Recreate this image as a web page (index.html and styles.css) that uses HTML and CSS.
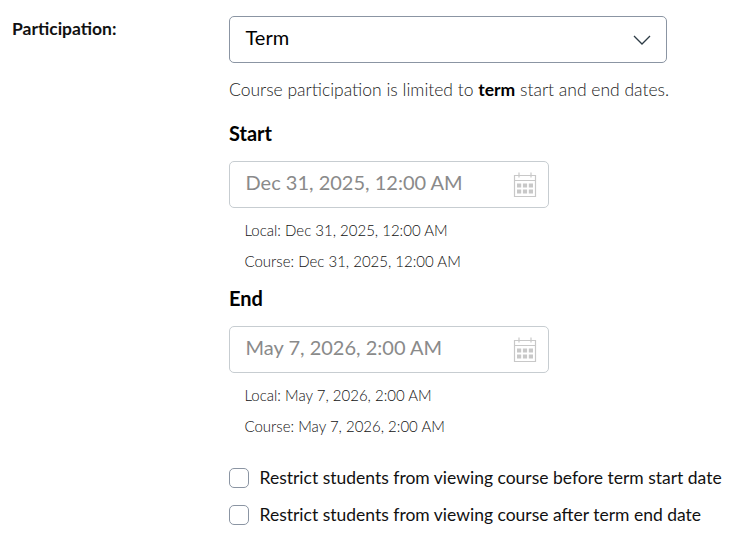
FILE: index.html
```html
<!DOCTYPE html>
<html lang="en">
<head>
    <meta charset="UTF-8">
    <title>Participation</title>
    <link rel="stylesheet" href="styles.css">
</head>
<body>
    <div class="form-row">
        <div class="row-label">Participation:</div>
        <div class="row-body">
            <div class="select-box">
                <span>Term</span>
                <svg class="chevron" width="18" height="10" viewBox="0 0 18 10"><path d="M1 1l8 8 8-8" fill="none" stroke="#2d3b45" stroke-width="1.3"/></svg>
            </div>
            <p class="help">Course participation is limited to <strong>term</strong> start and end dates.</p>

            <h3 class="date-title first">Start</h3>
            <div class="date-box">
                <span>Dec 31, 2025, 12:00 AM</span>
                <svg class="cal" width="24" height="25" viewBox="0 0 24 25"><use href="#cal-icon"/></svg>
            </div>
            <div class="date-note first">Local: Dec 31, 2025, 12:00 AM</div>
            <div class="date-note">Course: Dec 31, 2025, 12:00 AM</div>

            <h3 class="date-title">End</h3>
            <div class="date-box">
                <span>May 7, 2026, 2:00 AM</span>
                <svg class="cal" width="24" height="25" viewBox="0 0 24 25"><use href="#cal-icon"/></svg>
            </div>
            <div class="date-note first">Local: May 7, 2026, 2:00 AM</div>
            <div class="date-note">Course: May 7, 2026, 2:00 AM</div>

            <label class="check-row top"><span class="check"></span>Restrict students from viewing course before term start date</label>
            <label class="check-row"><span class="check"></span>Restrict students from viewing course after term end date</label>
        </div>
    </div>

    <!-- shared calendar icon -->
    <svg class="defs" width="0" height="0">
        <symbol id="cal-icon" viewBox="0 0 24 25">
            <path d="M1.5 3.5h21v21h-21z M1.5 8.5h21 M6 0.5v5 M18 0.5v5" fill="none" stroke="#c8c8c8" stroke-width="1.2"/>
            <path d="M4 11.5h4.2v4H4z M9.9 11.5h4.2v4H9.9z M15.8 11.5H20v4h-4.2z M4 17.5h4.2v4H4z M9.9 17.5h4.2v4H9.9z M15.8 17.5H20v4h-4.2z" fill="#c8c8c8"/>
        </symbol>
    </svg>
</body>
</html>
```

FILE: styles.css
```css
body {
    margin: 0;
    background: white;
    font-family: 'Lato', 'Liberation Sans', sans-serif;
    color: #000;
    overflow: hidden;
}

.form-row {
    display: flex;
    padding: 16px 0 0 12px;
}

.row-label {
    width: 217px;
    flex: none;
    padding-top: 3px;
    font-size: 17.5px;
    line-height: 20px;
    font-weight: 700;
    color: #111;
}

.row-body {
    flex: none;
    width: 500px;
}

.select-box {
    display: flex;
    align-items: center;
    justify-content: space-between;
    box-sizing: border-box;
    width: 438px;
    height: 47px;
    padding: 0 15px 0 15.5px;
    border: 1px solid #8b95a3;
    border-radius: 5px;
    font-size: 20px;
}

.select-box span,
.date-box span {
    margin-bottom: 5px;
}

.help {
    margin: 15px 0 0;
    font-size: 17.5px;
    line-height: 24px;
    color: #222;
    font-weight: 300;
}

.help strong {
    font-weight: 700;
    color: #000;
}

.date-title {
    margin: 14px 0 0;
    font-size: 20px;
    line-height: 24px;
    font-weight: 700;
}

.date-title.first {
    margin-top: 19px;
}

.date-box {
    display: flex;
    align-items: center;
    justify-content: space-between;
    box-sizing: border-box;
    width: 320px;
    height: 47px;
    margin-top: 16px;
    padding: 0 11px 0 15.5px;
    border: 1px solid #c7cdd1;
    border-radius: 5px;
    font-size: 20px;
    color: #8a8a8a;
}

.cal {
    display: block;
}

.date-note {
    margin: 10px 0 0 15.5px;
    font-size: 15px;
    line-height: 21px;
    font-weight: 300;
    color: #111;
}

.date-note.first {
    margin-top: 12px;
}

.check-row {
    display: flex;
    align-items: center;
    gap: 10.5px;
    margin-top: 16px;
    font-size: 17.5px;
    line-height: 21px;
    color: #111;
}

.check-row.top {
    margin-top: 30px;
}

.check {
    flex: none;
    box-sizing: border-box;
    width: 20px;
    height: 20px;
    border: 1px solid #8b95a3;
    border-radius: 5px;
}

.defs {
    position: absolute;
}
```
